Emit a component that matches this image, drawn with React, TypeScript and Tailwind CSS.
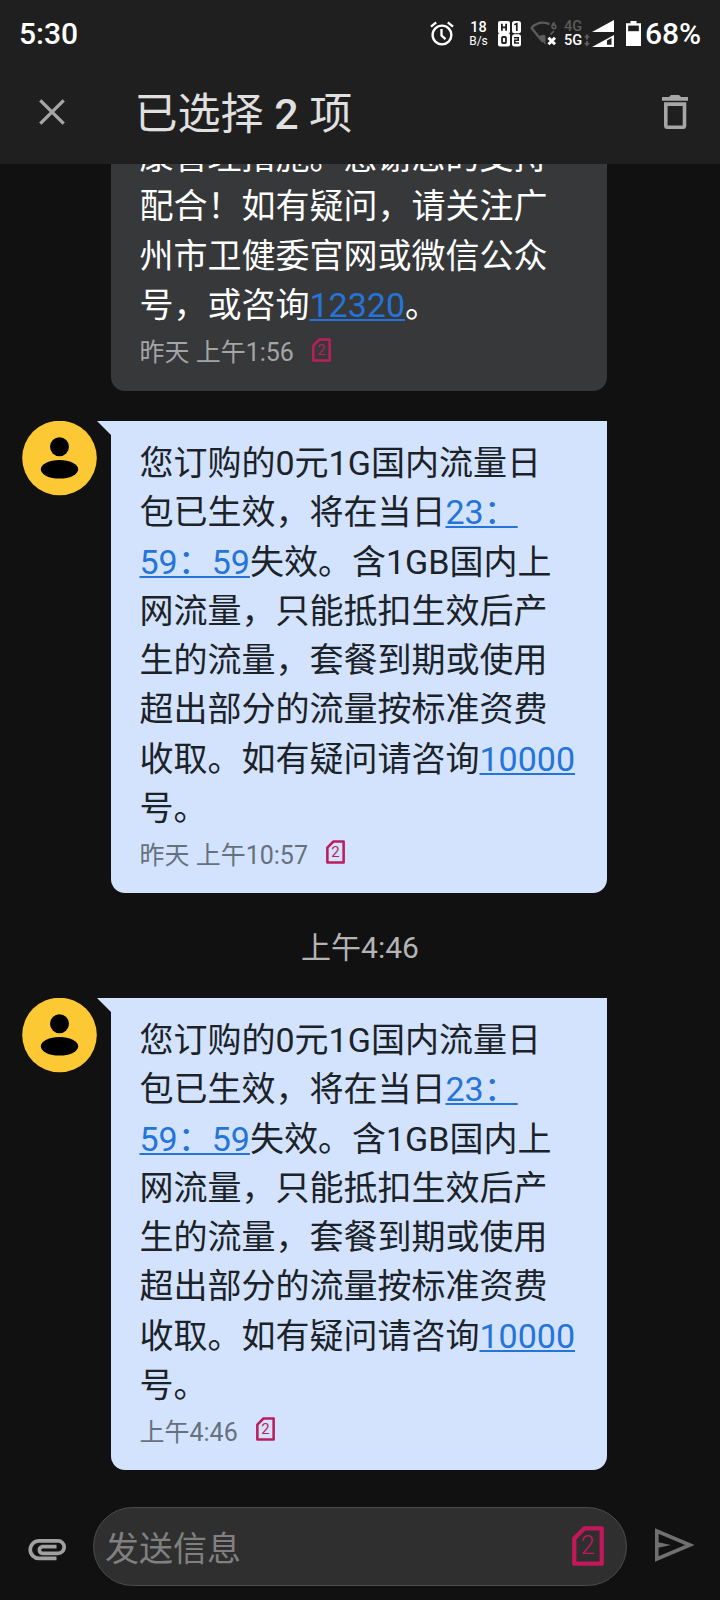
import type { ReactNode } from "react";

type Sim = { className: string };

function SimIcon({ className }: Sim) {
  return (
    <svg viewBox="0 0 32 40" className={className} fill="none">
      <path
        d="M12.5 2.3H29.7V37.7H2.3V12.5Z"
        stroke="currentColor"
        strokeWidth="4.3"
        strokeLinejoin="round"
      />
      <text
        x="15.7"
        y="28.4"
        textAnchor="middle"
        fontSize="25"
        fontFamily="Roboto, sans-serif"
        fill="currentColor"
      >
        2
      </text>
    </svg>
  );
}

function Link({ children }: { children: ReactNode }) {
  return (
    <span className="text-[#2474d9] underline decoration-[1.5px] underline-offset-[2px]">
      {children}
    </span>
  );
}

function Avatar() {
  return (
    <svg viewBox="0 0 75 75" className="h-[75px] w-[75px] shrink-0">
      <circle cx="37.5" cy="37" r="37.3" fill="#fcc934" />
      <circle cx="37.5" cy="25.7" r="9.5" fill="#000" />
      <ellipse cx="37.5" cy="48.3" rx="18.7" ry="9.3" fill="#000" />
    </svg>
  );
}

function StatusBar() {
  return (
    <div className="flex h-[68px] items-center pl-[19px] text-white">
      <span className="w-[411px] text-[30px] font-medium leading-none">
        5:30
      </span>

      {/* alarm */}
      <svg viewBox="0 0 24 26" className="h-[26px] w-[24px]" fill="none" stroke="#fff">
        <circle cx="12" cy="14" r="9.4" strokeWidth="2.4" />
        <path d="M11.5 8V14.5L15.5 18.2" strokeWidth="2.3" />
        <path d="M1 5.6L6.2 1.4M23 5.6L17.8 1.4" strokeWidth="2.4" />
      </svg>

      {/* network speed */}
      <div className="ml-4 flex w-[17px] flex-col items-center">
        <span className="text-[14.5px] font-medium leading-[14px]">18</span>
        <span className="text-[12px] leading-[13px]">B/s</span>
      </div>

      {/* HD for both cards */}
      <svg viewBox="0 0 23 26" className="ml-[11px] h-[26px] w-[23px]" fill="none">
        <rect x="0" y="0" width="12" height="12.5" rx="2" fill="#fff" />
        <path d="M3.9 2.8V9.8M8.1 2.8V9.8M3.9 6.3H8.1" stroke="#1f1f1f" strokeWidth="1.8" />
        <rect x="0" y="12" width="12" height="13.5" rx="2" fill="#fff" />
        <rect x="4" y="16" width="4" height="6" rx="1" stroke="#1f1f1f" strokeWidth="1.8" />
        <rect x="14" y="0" width="9" height="12.3" rx="2.5" fill="#fff" />
        <path d="M16.3 3.8L18.8 2.8V10" stroke="#1f1f1f" strokeWidth="1.7" />
        <rect x="14" y="13.2" width="9" height="12.3" rx="2.5" fill="#fff" />
        <path d="M16 16.8H20.3V19.2H16.8V22H21" stroke="#1f1f1f" strokeWidth="1.5" />
      </svg>

      {/* wifi, no connection */}
      <svg viewBox="0 0 27 26" className="ml-[9px] h-[26px] w-[27px]">
        <path
          d="M1.3 6.8C7 1.2 14 .8 19.5 3.2M1.3 6.8L13 21"
          stroke="#5c5c5c"
          strokeWidth="2.4"
          fill="none"
        />
        <path d="M9 15.5Q12.5 12.5 15.5 14.5V24Z" fill="#5c5c5c" />
        <path
          d="M25 1.5Q22 2.3 22 5.8M22 5.8A1.9 1.9 0 1 0 25.8 5.8A1.9 1.9 0 1 0 22 5.8M24 10L20.5 13.5"
          stroke="#5c5c5c"
          strokeWidth="1.6"
          fill="none"
        />
        <path d="M18.5 16.7L25 23.2M25 16.7L18.5 23.2" stroke="#fff" strokeWidth="3" />
      </svg>

      <div className="ml-[7px] flex w-[19px] flex-col font-medium">
        <span className="text-[14.5px] leading-[14px] text-[#5c5c5c]">4G</span>
        <span className="text-[14.5px] leading-[14px]">5G</span>
      </div>
      <svg viewBox="0 0 6 26" className="ml-[1px] h-[26px] w-[6px]" fill="#5c5c5c">
        <path d="M3 13L6 16.5H4V18.5H2V16.5H0ZM3 25.5L0 22H2V20H4V22H6Z" />
      </svg>

      {/* signal strength */}
      <svg viewBox="0 0 22 27" className="mb-px ml-[2px] h-[27px] w-[22px]">
        <path d="M0 12L22 0V12Z" fill="#fff" />
        <path d="M0 27L22 15V27Z" fill="#fff" />
        <path d="M15 20.5L19.5 18V24.8H15Z" fill="#1f1f1f" />
      </svg>

      {/* battery */}
      <svg viewBox="0 0 15 25" className="mb-[2px] ml-[12px] h-[25px] w-[15px]">
        <path d="M4.5 0H10.5V2.3H15V25H0V2.3H4.5Z" fill="#fff" />
        <rect x="2.2" y="4.6" width="10.6" height="5.6" fill="#1f1f1f" />
      </svg>
      <span className="ml-[4px] text-[30px] font-medium leading-none">68%</span>
    </div>
  );
}

function TopBar() {
  return (
    <header className="relative z-10 h-[164px] shrink-0 bg-[#1f1f1f]">
      <StatusBar />
      <div className="flex h-[90px] items-center text-[#e0e0e0]">
        <svg
          viewBox="0 0 26 26"
          className="mb-[2px] ml-[39px] h-[26px] w-[26px]"
          stroke="#a6a6a6"
          strokeWidth="3.3"
        >
          <path d="M1.3 1.3L24.7 24.7M24.7 1.3L1.3 24.7" />
        </svg>
        <h1 className="ml-[69.5px] flex-1 whitespace-pre pt-[2px] text-[43px] leading-none">
          已选择 <span className="font-medium">2</span> 项
        </h1>
        <svg viewBox="0 0 26 34" className="mb-[2px] mr-[32px] h-[34px] w-[26px]" fill="#a6a6a6">
          <path d="M0 2H7L9 0H17L19 2H26V5.7H0Z" />
          <path
            fillRule="evenodd"
            d="M2 7.3H24.3V30.5Q24.3 34 21 34H5.3Q2 34 2 30.5ZM5.6 11V30.4H20.7V11Z"
          />
        </svg>
      </div>
    </header>
  );
}

function Stamp({ time, color }: { time: string; color: string }) {
  return (
    <div className={`flex h-[44px] items-center text-[25px] ${color}`}>
      <span>{time}</span>
      <SimIcon className="mb-1.5 ml-[18px] h-[24px] w-[19px] text-[#b91f5c]" />
    </div>
  );
}

function DataPackMessage({ time }: { time: string }) {
  return (
    <div className="flex h-[472px] pl-[22px]">
      <Avatar />
      <svg viewBox="0 0 14 14" className="h-[14px] w-[14px] shrink-0" fill="#d3e3fd">
        <path d="M0 0H14V14Z" />
      </svg>
      <div className="w-[496px] rounded-b-[14px] bg-[#d3e3fd] pl-[28.5px] pt-[18px] text-[#1b2228]">
        <p className="whitespace-pre text-[34px] leading-[49.3px]">
          您订购的0元1G国内流量日{"\n"}
          包已生效，将在当日<Link>23：</Link>{"\n"}
          <Link>59：59</Link>失效。含1GB国内上{"\n"}
          网流量，只能抵扣生效后产{"\n"}
          生的流量，套餐到期或使用{"\n"}
          超出部分的流量按标准资费{"\n"}
          收取。如有疑问请咨询<Link>10000</Link>{"\n"}
          号。
        </p>
        <Stamp time={time} color="text-[#65717d]" />
      </div>
    </div>
  );
}

function Composer() {
  return (
    <footer className="flex h-[93px] items-start bg-[#111111]">
      <svg
        viewBox="0 0 38 22"
        className="ml-[28px] mt-[32px] h-[22px] w-[38px]"
        fill="none"
        stroke="#a0a0a0"
        strokeWidth="3.7"
      >
        <path d="M28.5 19.4H11A8.7 8.7 0 0 1 11 1.9H30A6.2 6.2 0 0 1 30 14.3H14A3.4 3.4 0 0 1 14 7.7H28.5" />
      </svg>
      <div className="ml-[27px] flex h-[79px] w-[534px] items-center justify-between rounded-full border border-[#4c4c4c] bg-[#2f2f2f] pl-[11px] pr-[22px]">
        <span className="pt-[5px] text-[34px] text-[#808080]">发送信息</span>
        <SimIcon className="mb-px h-[40px] w-[32px] font-light text-[#c2185b]" />
      </div>
      <svg
        viewBox="0 0 39 34"
        className="ml-[28px] mt-[21px] h-[34px] w-[39px]"
        fill="none"
        stroke="#707070"
        strokeWidth="3.6"
      >
        <path d="M1.8 3V31L35 17Z" />
        <path d="M2 14L16 17L2 20Z" fill="#707070" stroke="none" />
      </svg>
    </footer>
  );
}

export default function App() {
  return (
    <div
      lang="zh-CN"
      className="flex h-[1600px] w-[720px] flex-col overflow-hidden bg-[#111111] font-[Roboto,'Noto_Sans_CJK_SC',sans-serif]"
    >
      <TopBar />

      <main className="flex-1">
        {/* scrolled part of an older message, top line runs under the bar */}
        <div className="-mt-[31px] ml-[111px] h-[258px] w-[496px] rounded-b-[14px] bg-[#37383a] pl-[28.5px] text-white">
          <p className="mb-px whitespace-pre text-[34px] leading-[49.3px]">
            康管理措施。感谢您的支持{"\n"}
            配合！如有疑问，请关注广{"\n"}
            州市卫健委官网或微信公众{"\n"}
            号，或咨询<Link>12320</Link>。
          </p>
          <Stamp time="昨天 上午1:56" color="text-[#a3a5a7]" />
        </div>

        <div className="h-[30px]" />
        <DataPackMessage time="昨天 上午10:57" />

        <div className="flex h-[105px] items-center justify-center pt-[4px] text-[30px] text-[#b4b4b4]">
          上午4:46
        </div>
        <DataPackMessage time="上午4:46" />
      </main>

      <Composer />
    </div>
  );
}
